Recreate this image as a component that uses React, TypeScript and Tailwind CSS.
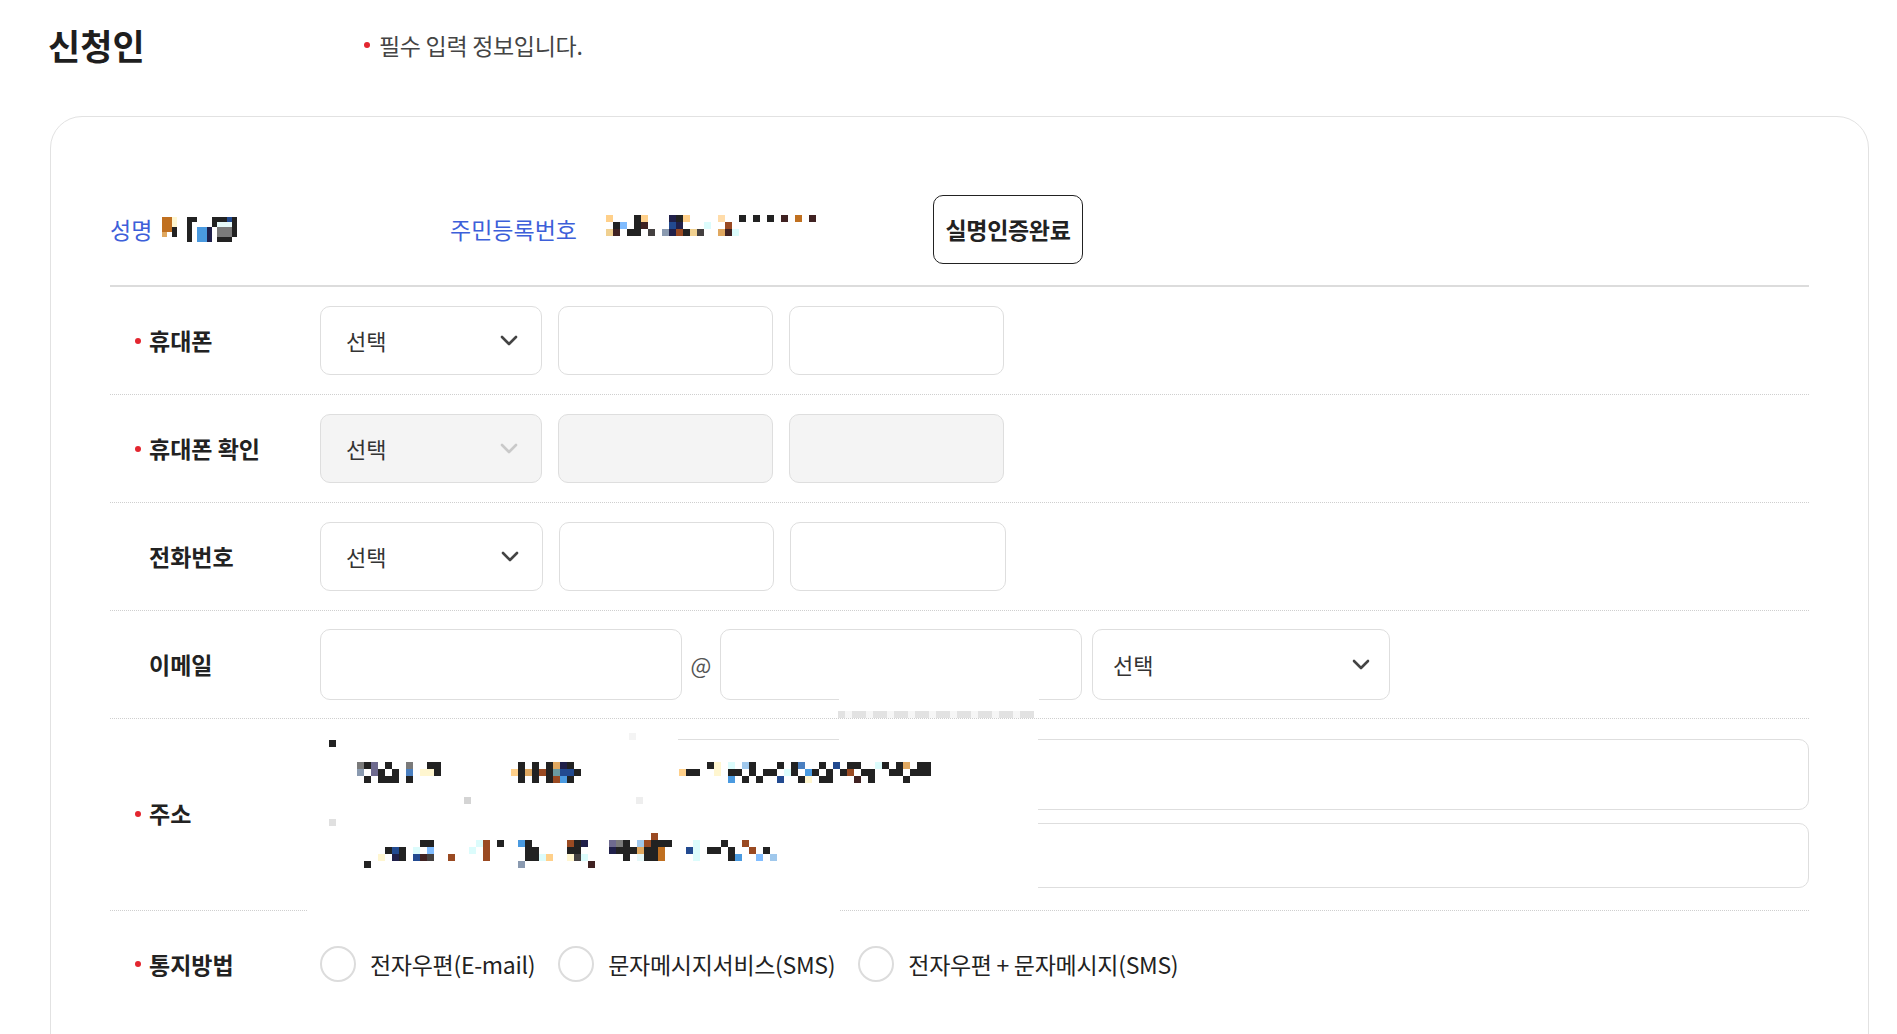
import type { ReactNode } from 'react';

// mosaic palette for the blurred personal data
const PAL: Record<string, string> = {
    k: '#222222', g: '#7a7a7a', v: '#6e6a8f', s: '#8a9ab0', b: '#4a7fc0',
    y: '#fff6d0', Y: '#ffd08a', o: '#e0a860', O: '#c07020', r: '#9a4a22',
    t: '#6a9aa0', B: '#224a90', L: '#4a9ae0', l: '#80bcff', c: '#dcfcfc',
    d: '#a0c8ec', n: '#20204a', p: '#402222', m: '#444040', w: '#e6f8f8',
    P: '#ffdcaa', e: '#d4d4d4', f: '#eeeeee', q: '#f4f4f4', h: '#e0e0e0', u: '#f0d090',
};

function parseRow(spec: string, cols: number) {
    const cells: (string | null)[] = Array(cols).fill(null);
    spec.split(' ').filter(Boolean).forEach(tok => {
        const idx = parseInt(tok, 10);
        const key = tok.replace(/[0-9]/g, '');
        if (idx < cols) cells[idx] = PAL[key] ?? null;
    });
    return cells;
}

function Mosaic({ rows, cols, cell }: { rows: string[]; cols: number; cell: number }) {
    return (
        <div className="flex flex-col">
            {rows.map((spec, ri) => (
                <div key={ri} className="flex">
                    {parseRow(spec, cols).map((color, ci) => (
                        <span
                            key={ci}
                            style={{ width: cell, height: cell, backgroundColor: color ?? 'transparent' }}
                        />
                    ))}
                </div>
            ))}
        </div>
    );
}

const NAME_ROWS = [
    '0O 1O 2y 5k 6k 10k 11k 12k 13B 14k',
    '0O 1O 2y 5k 10k 11w 12w 13w 14k',
    '0O 1O 2k 5k 7L 8L 9n 11g 12g 13g 14k',
    '0o 2k 5k 7L 8L 9n 11g 12g 13g 14k',
    '5k 7L 8L 9n 11k 12k 13k',
];

const ID_ROWS = [
    '0Y 4k 5Y 9n 10k 11Y 16P 19k 21k 23k 25p 27O 29p',
    '1k 2l 4k 5p 9B 10n 14c 17r',
    '0u 1p 3k 4k 6m 8s 9n 10r 11k 12u 13m 16o 17p 18c',
];

const ADDR1_ROWS = [
    '0g 1k 2v 4k 7g 10k 11k 23k 25k 27k 28o 29n 30k 50k 51y 53c 55d 56k 60k 62k 63b 66k 68B 70k 71k 74c 75k 77k 78o 80k 81k',
    '0s 2v 3k 5k 7b 9y 10y 11k 22Y 23k 24o 25k 26r 27k 28t 29B 30B 31k 46Y 47k 48k 51y 53k 54k 56k 58k 59k 61c 62k 64L 65k 67k 69k 70r 72k 73k 76k 77k 79k 80k 81k',
    '1k 3k 4k 5k 7k 23k 25k 27k 28r 29L 30k 53L 55k 57k 60B 63k 64y 66k 67k 71p 73k 78k',
];

const ADDR2_ROWS = [
    '42r',
    '9k 10k 17c 18r 20k 23L 24k 30r 31k 32n 36v 37g 38k 40d 41r 42k 43k 44k 48c 52k 55r',
    '4k 5B 6k 8c 10l 16c 18r 24k 25k 30k 31k 36n 37k 38k 39k 40o 41k 42k 43O 47B 48c 50k 51k 53k 56r 58k',
    '3y 5n 6k 8B 9p 10m 13r 18r 24k 25k 26c 27Y 30y 31m 32c 38k 40w 41k 42k 43O 48c 53k 54L 57l 59d',
    '1k 23s 33p',
];

const RedDot = ({ hidden = false }: { hidden?: boolean }) => (
    <span className={`w-[6px] h-[6px] rounded-full shrink-0 ${hidden ? 'bg-transparent' : 'bg-[#e3262f]'}`} />
);

const Chevron = ({ muted = false }: { muted?: boolean }) => (
    <svg width="18" height="11" viewBox="0 0 18 11" fill="none">
        <path d="M2 2 L9 9 L16 2" stroke={muted ? '#c9c9c9' : '#444'} strokeWidth="2.6" strokeLinecap="round" strokeLinejoin="round" />
    </svg>
);

function SelectBox({ width, disabled = false }: { width: string; disabled?: boolean }) {
    return (
        <div className={`${width} h-[69px] rounded-[10px] border border-[#dedede] flex items-center justify-between pl-[25px] pr-[23px] ${disabled ? 'bg-[#f4f4f4]' : 'bg-white'}`}>
            <span className="text-[22px] text-[#333]">선택</span>
            <Chevron muted={disabled} />
        </div>
    );
}

function InputBox({ width, disabled = false, height = 'h-[69px]' }: { width: string; disabled?: boolean; height?: string }) {
    return <div className={`${width} ${height} rounded-[10px] border border-[#dedede] ${disabled ? 'bg-[#f4f4f4]' : 'bg-white'}`} />;
}

function FormRow({ label, required = false, children, className = '' }: { label: string; required?: boolean; children: ReactNode; className?: string }) {
    return (
        <div className={`flex items-center border-b border-dotted border-[#cfcfcf] ${className}`}>
            <div className="w-[210px] shrink-0 flex items-center pl-[25px] gap-[8px]">
                <RedDot hidden={!required} />
                <span className="text-[23px] font-bold text-[#222]">{label}</span>
            </div>
            {children}
        </div>
    );
}

function Radio({ label }: { label: string }) {
    return (
        <label className="flex items-center gap-[14px]">
            <span className="w-[36px] h-[36px] rounded-full border-2 border-[#dcdcdc] bg-white" />
            <span className="text-[23px] text-[#222] tracking-[-0.3px]">{label}</span>
        </label>
    );
}

export default function App() {
    return (
        <div className="min-h-screen bg-white font-['Noto_Sans_CJK_KR','Noto_Sans',sans-serif] text-[#222]">
            {/* HEADER */}
            <div className="flex items-center h-[48px] mt-[21px] pl-[48px]">
                <h2 className="w-[316px] text-[35px] font-bold text-[#1e1e1e]">신청인</h2>
                <div className="flex items-center gap-[9px]">
                    <RedDot />
                    <span className="text-[23px] text-[#444] tracking-[-0.3px]">필수 입력 정보입니다.</span>
                </div>
            </div>

            {/* FORM CARD */}
            <div className="ml-[50px] mr-[28px] mt-[47px] border border-[#e2e2e2] rounded-[32px] px-[59px] pt-[78px] pb-[90px]">
                {/* name / resident number */}
                <div className="flex items-center h-[69px]">
                    <div className="w-[340px] flex items-center gap-[10px]">
                        <span className="text-[23px] text-[#3d5fd9]">성명</span>
                        <Mosaic rows={NAME_ROWS} cols={15} cell={5} />
                    </div>
                    <div className="w-[483px] flex items-center">
                        <span className="w-[156px] text-[23px] text-[#3d5fd9]">주민등록번호</span>
                        <div className="-mt-[8px]">
                            <Mosaic rows={ID_ROWS} cols={31} cell={7} />
                        </div>
                    </div>
                    <button className="w-[150px] h-[69px] rounded-[10px] border border-[#222] bg-white text-[23px] font-bold tracking-[-0.3px] text-[#222]">
                        실명인증완료
                    </button>
                </div>
                <div className="mt-[21px] h-[2px] bg-[#dcdcdc]" />

                {/* phone */}
                <FormRow label="휴대폰" required className="py-[19px]">
                    <div className="flex gap-[16px]">
                        <SelectBox width="w-[222px]" />
                        <InputBox width="w-[215px]" />
                        <InputBox width="w-[215px]" />
                    </div>
                </FormRow>

                <FormRow label="휴대폰 확인" required className="py-[19px]">
                    <div className="flex gap-[16px]">
                        <SelectBox width="w-[222px]" disabled />
                        <InputBox width="w-[215px]" disabled />
                        <InputBox width="w-[215px]" disabled />
                    </div>
                </FormRow>

                <FormRow label="전화번호" className="py-[19px]">
                    <div className="flex gap-[16px]">
                        <SelectBox width="w-[223px]" />
                        <InputBox width="w-[215px]" />
                        <InputBox width="w-[216px]" />
                    </div>
                </FormRow>

                {/* email */}
                <FormRow label="이메일" className="py-[18px]">
                    <div className="flex items-center">
                        <InputBox width="w-[362px]" height="h-[71px]" />
                        <span className="w-[38px] text-center text-[22px] text-[#555]">@</span>
                        <InputBox width="w-[362px]" height="h-[71px]" />
                        <div className="ml-[10px]">
                            <div className="w-[298px] h-[71px] rounded-[10px] border border-[#dedede] flex items-center justify-between pl-[20px] pr-[19px]">
                                <span className="text-[22px] text-[#333]">선택</span>
                                <Chevron />
                            </div>
                        </div>
                    </div>
                </FormRow>

                {/* address */}
                <div className="relative">
                    <FormRow label="주소" required className="pt-[20px] pb-[22px]">
                        <div className="flex-1 flex flex-col gap-[13px]">
                            <InputBox width="w-full" height="h-[71px]" />
                            <InputBox width="w-full" height="h-[65px]" />
                        </div>
                    </FormRow>

                    {/* redacted address */}
                    <div className="absolute left-[729px] -top-[23px] w-[200px] h-[16px] bg-white" />
                    <div className="absolute left-[728px] -top-[8px] flex">
                        {Array.from({ length: 28 }).map((_, i) => (
                            <span key={i} className={`w-[7px] h-[7px] ${i % 3 === 1 ? 'bg-[#f6f6f6]' : 'bg-[#e2e2e2]'}`} />
                        ))}
                    </div>
                    <div className="absolute left-[198px] top-[2px] w-[370px] h-[194px] bg-white" />
                    <div className="absolute left-[568px] top-[22px] w-[161px] h-[174px] bg-white" />
                    <div className="absolute left-[729px] top-[2px] w-[199px] h-[187px] bg-white" />
                    <span className="absolute left-[219px] top-[21px] w-[7px] h-[7px] bg-[#222]" />
                    <span className="absolute left-[519px] top-[14px] w-[7px] h-[7px] bg-[#f4f4f4]" />
                    <span className="absolute left-[354px] top-[78px] w-[7px] h-[7px] bg-[#d4d4d4]" />
                    <span className="absolute left-[526px] top-[78px] w-[7px] h-[7px] bg-[#eeeeee]" />
                    <span className="absolute left-[219px] top-[100px] w-[7px] h-[7px] bg-[#e0e0e0]" />
                    <div className="absolute left-[247px] top-[43px]">
                        <Mosaic rows={ADDR1_ROWS} cols={82} cell={7} />
                    </div>
                    <div className="absolute left-[247px] top-[114px]">
                        <Mosaic rows={ADDR2_ROWS} cols={60} cell={7} />
                    </div>
                </div>

                {/* notification */}
                <div className="flex items-center pt-[35px] pb-[34px]">
                    <div className="w-[210px] shrink-0 flex items-center pl-[25px] gap-[8px]">
                        <RedDot />
                        <span className="text-[23px] font-bold text-[#222]">통지방법</span>
                    </div>
                    <div className="flex items-center gap-[23px]">
                        <Radio label="전자우편(E-mail)" />
                        <Radio label="문자메시지서비스(SMS)" />
                        <Radio label="전자우편 + 문자메시지(SMS)" />
                    </div>
                </div>
            </div>
        </div>
    );
}
